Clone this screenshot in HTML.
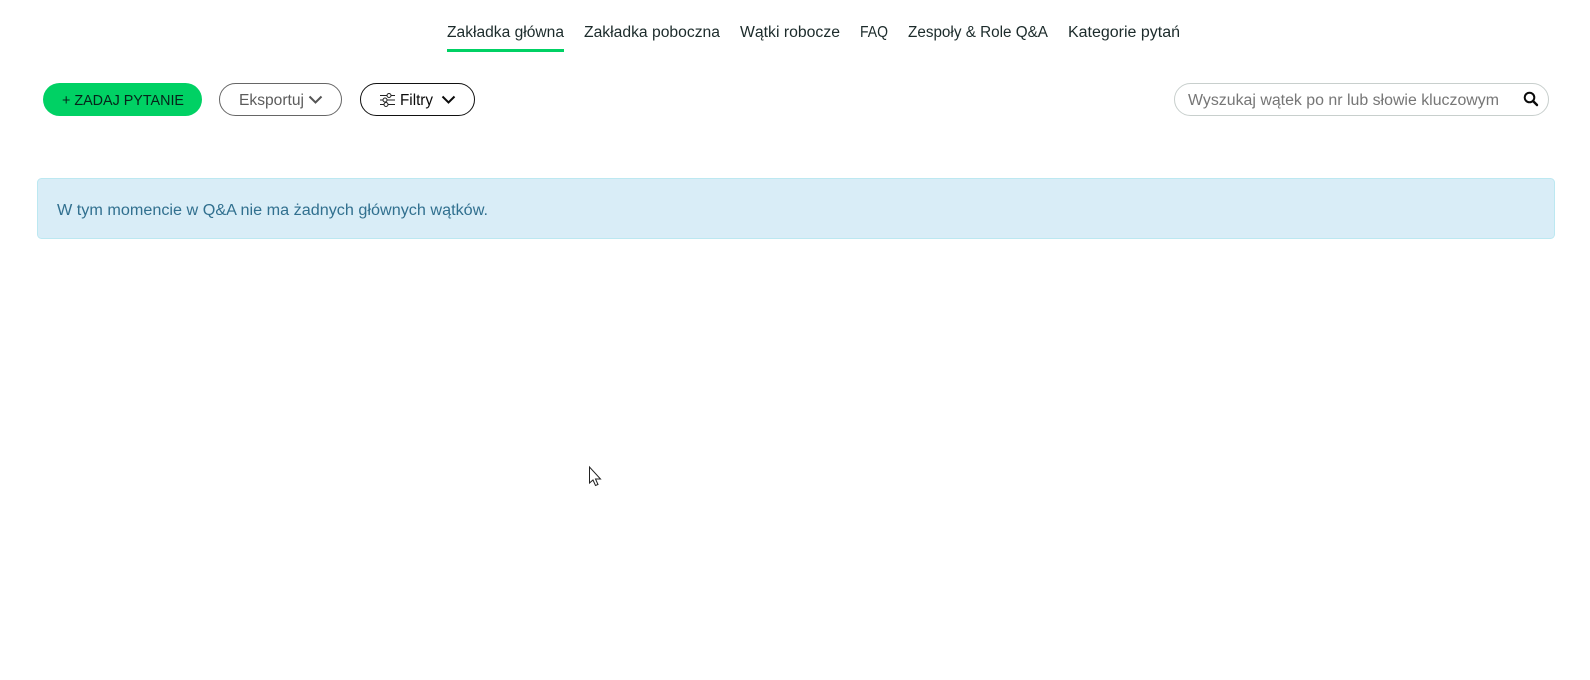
<!DOCTYPE html>
<html lang="pl">
<head>
<meta charset="utf-8">
<title>Q&amp;A</title>
<style>
html,body{margin:0;padding:0;background:#fff;width:1590px;height:680px;overflow:hidden}
svg{display:block}
text{font-family:"Liberation Sans",sans-serif}
</style>
</head>
<body>
<svg width="1590" height="680" viewBox="0 0 1590 680" xmlns="http://www.w3.org/2000/svg">
  <g font-size="15.500" fill="#1c2b2b">
    <text x="447" y="37" textLength="117" lengthAdjust="spacingAndGlyphs">Zakładka główna</text>
    <text x="584" y="37" textLength="136" lengthAdjust="spacingAndGlyphs">Zakładka poboczna</text>
    <text x="740" y="37" textLength="100" lengthAdjust="spacingAndGlyphs">Wątki robocze</text>
    <text x="860" y="37" font-size="16" textLength="28" lengthAdjust="spacingAndGlyphs">FAQ</text>
    <text x="908" y="37" textLength="140" lengthAdjust="spacingAndGlyphs">Zespoły &amp; Role Q&amp;A</text>
    <text x="1068" y="37" textLength="112" lengthAdjust="spacingAndGlyphs">Kategorie pytań</text>
  </g>
  <rect x="447" y="49" width="117" height="3" fill="#00d164"/>

  <rect x="43" y="83" width="159" height="33" rx="16.500" fill="#00d164"/>
  <text x="62" y="105" font-size="15" fill="#06231a" textLength="122" lengthAdjust="spacingAndGlyphs">+ ZADAJ PYTANIE</text>

  <rect x="219.500" y="83.500" width="122" height="32" rx="16" fill="#fff" stroke="#666" stroke-width="1"/>
  <text x="239" y="105" font-size="15.500" fill="#5c5c5c" textLength="65" lengthAdjust="spacingAndGlyphs">Eksportuj</text>
  <path d="M309.500 96.500 L315.500 102.500 L321.500 96.500" fill="none" stroke="#555" stroke-width="2"/>

  <rect x="360.500" y="83.500" width="114" height="32" rx="16" fill="#fff" stroke="#111" stroke-width="1"/>
  <g fill="none" stroke="#222" stroke-width="1">
    <path d="M380 95.500 H395 M380 100 H395 M380 104.500 H395"/>
    <circle cx="389" cy="95.500" r="2" fill="#fff"/>
    <circle cx="385" cy="100" r="2" fill="#fff"/>
    <circle cx="386" cy="104.500" r="2" fill="#fff"/>
  </g>
  <text x="400" y="105" font-size="15.500" fill="#0b0b0b" textLength="33" lengthAdjust="spacingAndGlyphs">Filtry</text>
  <path d="M442.500 96.500 L448.500 102.500 L454.500 96.500" fill="none" stroke="#0b0b0b" stroke-width="2"/>

  <rect x="1174.500" y="83.500" width="374" height="32" rx="16" fill="#fff" stroke="#c8cfcd" stroke-width="1"/>
  <text x="1188" y="105" font-size="15.500" fill="#767676" textLength="311" lengthAdjust="spacingAndGlyphs">Wyszukaj wątek po nr lub słowie kluczowym</text>
  <circle cx="1529.500" cy="97.500" r="4.800" fill="none" stroke="#0b0b0b" stroke-width="2"/>
  <path d="M1533 101 L1537 105" fill="none" stroke="#0b0b0b" stroke-width="2.400" stroke-linecap="round"/>

  <rect x="37.500" y="178.500" width="1517" height="60" rx="4" fill="#d9edf7" stroke="#bce8f1" stroke-width="1"/>
  <text x="57" y="215" font-size="15.500" fill="#31708f" textLength="431" lengthAdjust="spacingAndGlyphs">W tym momencie w Q&amp;A nie ma żadnych głównych wątków.</text>

  <path d="M589.500 467 V483 L593 480 L595.500 485.500 L598 484.500 L595.500 479 L600.500 479 Z" fill="#fff" stroke="#222" stroke-width="1" stroke-linejoin="miter"/>
</svg>
</body>
</html>
